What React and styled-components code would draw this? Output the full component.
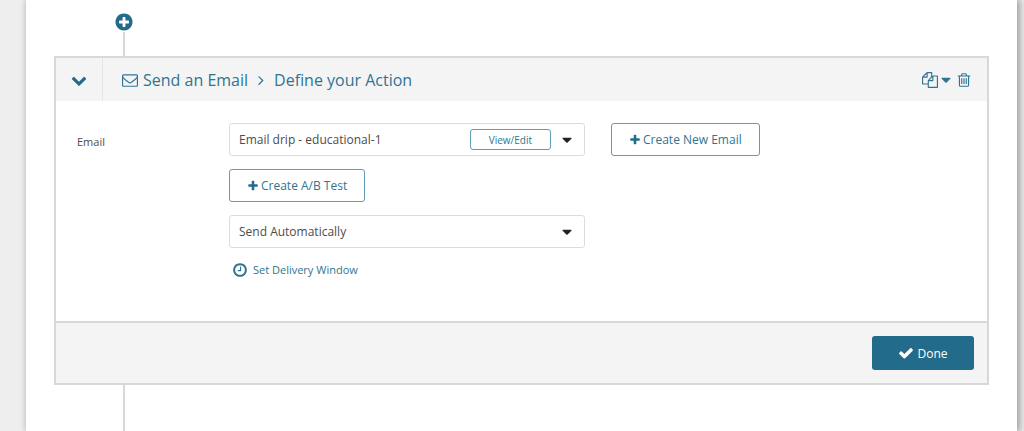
import React from 'react';
import styled, { createGlobalStyle } from 'styled-components';

const teal = '#236b8a';
const tealText = '#2f7593';
const line = '#d8d8d8';

const GlobalStyle = createGlobalStyle`
    * {
        box-sizing: border-box;
    }
    body {
        margin: 0;
        background: #eee;
        color: #4c4c4c;
        font-family: "Open Sans", "Noto Sans", sans-serif;
        font-size: 12px;
    }
    button, select {
        font-family: inherit;
        font-size: inherit;
        color: inherit;
        cursor: pointer;
    }
`;

const Page = styled.main`
    display: flex;
    flex-direction: column;
    min-height: 100vh;
    margin: 0 7px 0 26px;
    padding: 0 28px;
    background: #fff;
    box-shadow: 2px 0 7px 1px rgba(0, 0, 0, .34);
`;

const AddStep = styled.button`
    display: flex;
    width: 20px;
    margin: 12px 0 0 60px;
    padding: 0;
    border: 0;
    background: none;
    color: ${teal};
`;

const Connector = styled.div`
    width: 2px;
    min-height: 24px;
    margin-left: 69px;
    flex: ${props => (props.$grow ? 1 : 'none')};
    background: ${line};
`;

const Card = styled.section`
    border: 2px solid ${line};
    background: #fff;
`;

const CardHeader = styled.header`
    display: flex;
    align-items: center;
    height: 43px;
    padding-right: 15px;
    background: #f4f4f4;
    color: ${tealText};
`;

const Toggle = styled.button`
    display: flex;
    align-items: center;
    justify-content: center;
    width: 47px;
    height: 100%;
    padding: 0;
    border: 0;
    border-right: 1px solid #e4e4e4;
    background: none;
    && {
        color: ${teal};
    }
`;

const Title = styled.h1`
    display: flex;
    align-items: center;
    flex: 1;
    margin: 0 0 0 19px;
    font-size: 16px;
    font-weight: 400;
    line-height: 22px;
`;

const TitleText = styled.span`
    display: flex;
    margin-left: 5px;
`;

const Actions = styled.div`
    display: flex;
    align-items: center;
    gap: 2px;
`;

const IconButton = styled.button`
    display: flex;
    align-items: center;
    padding: 0;
    border: 0;
    background: none;
`;

const CardBody = styled.div`
    display: grid;
    grid-template-columns: 152px 1fr;
    padding: 22px 22px 42px 21px;
`;

const Label = styled.label`
    line-height: 18px;
    padding-top: 10px;
    font-size: 11px;
`;

const Fields = styled.div`
    display: flex;
    flex-direction: column;
    align-items: flex-start;
    gap: 13px;
`;

const FieldRow = styled.div`
    display: flex;
    gap: 26px;
`;

const SelectBox = styled.div`
    position: relative;
    width: 356px;
`;

const Select = styled.select`
    appearance: none;
    display: block;
    width: 100%;
    height: 33px;
    padding: 0 40px 0 9px;
    border: 1px solid #dcdcdc;
    border-radius: 3px;
    background: #fff;
`;

const SelectCaret = styled.span`
    position: absolute;
    top: 0;
    right: 10px;
    display: flex;
    align-items: center;
    height: 100%;
    color: #222;
    pointer-events: none;
`;

const OutlineButton = styled.button`
    display: flex;
    align-items: center;
    justify-content: center;
    gap: 2px;
    height: 33px;
    padding: 0 17px;
    border: 1px solid #5f9cb5;
    border-radius: 3px;
    background: #fff;
    && {
        color: ${tealText};
    }
    svg {
        color: ${teal};
    }
`;

const ViewEdit = styled(OutlineButton)`
    position: absolute;
    top: 6px;
    right: 34px;
    height: 21px;
    padding: 0 18px;
    font-size: 10px;
`;

const DeliveryLink = styled.a`
    display: flex;
    align-items: center;
    gap: 5px;
    padding-left: 3px;
    color: ${tealText};
    font-size: 11px;
    line-height: 18px;
    text-decoration: none;
`;

const CardFooter = styled.footer`
    display: flex;
    justify-content: flex-end;
    padding: 13px;
    border-top: 2px solid ${line};
    background: #f4f4f4;
`;

const DoneButton = styled.button`
    display: flex;
    align-items: center;
    justify-content: center;
    gap: 3px;
    width: 102px;
    height: 34px;
    border: 0;
    border-radius: 3px;
    background: ${teal};
    && {
        color: #fff;
    }
`;

const disc = 'q0 209-103 385.5t-279.5 279.5-385.5 103-385.5-103-279.5-279.5-103-385.5 103-385.5 279.5-279.5 385.5-103 385.5 103 279.5 279.5 103 385.5z';
const bar = 'v576q0 14-9 23t-23 9h-64q-14 0-23-9t-9-23v-576q0-14 9-23t23-9h64q14 0 23 9t9 23z';

const icons = {
    plusCircle: `M1344 960v-128q0-26-19-45t-45-19h-256v-256q0-26-19-45t-45-19h-128q-26 0-45 19t-19 45v256h-256q-26 0-45 19t-19 45v128q0 26 19 45t45 19h256v256q0 26 19 45t45 19h128q26 0 45-19t19-45v-256h256q26 0 45-19t19-45zm320-64${disc}`,
    plus: 'M1600 736v192q0 40-28 68t-68 28h-416v416q0 40-28 68t-68 28h-192q-40 0-68-28t-28-68v-416h-416q-40 0-68-28t-28-68v-192q0-40 28-68t68-28h416v-416q0-40 28-68t68-28h192q40 0 68 28t28 68v416h416q40 0 68 28t28 68z',
    check: 'M1671 566q0 40-28 68l-724 724-136 136q-28 28-68 28t-68-28l-136-136-362-362q-28-28-28-68t28-68l136-136q28-28 68-28t68 28l294 295 656-657q28-28 68-28t68 28l136 136q28 28 28 68z',
    chevronDown: 'M1683 808l-742 741q-19 19-45 19t-45-19l-742-741q-19-19-19-45.5t19-45.5l166-165q19-19 45-19t45 19l531 531 531-531q19-19 45-19t45 19l166 165q19 19 19 45.5t-19 45.5z',
    angleRight: 'M1171 960q0 13-10 23l-466 466q-10 10-23 10t-23-10l-50-50q-10-10-10-23t10-23l393-393-393-393q-10-10-10-23t10-23l50-50q10-10 23-10t23 10l466 466q10 10 10 23z',
    caret: 'M1408 704q0 26-19 45l-448 448q-19 19-45 19t-45-19l-448-448q-19-19-19-45t19-45 45-19h896q26 0 45 19t19 45z',
    clock: `M1024 544v448q0 14-9 23t-23 9h-320q-14 0-23-9t-9-23v-64q0-14 9-23t23-9h224v-352q0-14 9-23t23-9h64q14 0 23 9t9 23zm416 352q0-148-73-273t-198-198-273-73-273 73-198 198-73 273 73 273 198 198 273 73 273-73 198-198 73-273zm224 0${disc}`,
    trash: `M704 736${bar}M960 736${bar}M1216 736${bar}m128 724v-948h-896v948q0 22 7 40.5t14.5 27 10.5 8.5h832q3 0 10.5-8.5t14.5-27 7-40.5zm-672-1076h448l-48-117q-7-9-17-11h-317q-10 2-17 11zm928 32v64q0 14-9 23t-23 9h-96v948q0 83-47 143.5t-113 60.5h-832q-66 0-113-58.5t-47-141.5v-952h-96q-14 0-23-9t-9-23v-64q0-14 9-23t23-9h309l70-167q15-37 54-63t79-26h320q40 0 79 26t54 63l70 167h309q14 0 23 9t9 23z`,
    files: 'M1696 384q40 0 68 28t28 68v1216q0 40-28 68t-68 28h-960q-40 0-68-28t-28-68v-288h-544q-40 0-68-28t-28-68v-672q0-40 20-88t48-76l408-408q28-28 76-48t88-20h416q40 0 68 28t28 68v328q68-40 128-40h416zm-544 213l-299 299h299v-299zm-640-384l-299 299h299v-299zm196 647l316-316v-416h-384v416q0 40-28 68t-68 28h-416v640h512v-256q0-40 20-88t48-76zm956 804v-1152h-384v416q0 40-28 68t-68 28h-416v640h896z',
    envelope: 'M1664 1504v-768q-32 36-69 66-268 206-426 338-51 43-83 67t-86.5 48.5-102.5 24.5h-2q-48 0-102.5-24.5t-86.5-48.5-83-67q-158-132-426-338-37-30-69-66v768q0 13 9.5 22.5t22.5 9.5h1472q13 0 22.5-9.5t9.5-22.5zm0-1051v-24.5l-.5-13-3-12.5-5.5-9-9-7.5-14-2.5h-1472q-13 0-22.5 9.5t-9.5 22.5q0 168 147 284 193 152 401 317 6 5 35 29.5t46 37.5 44.5 31.5 50.5 27.5 43 9h2q20 0 43-9t50.5-27.5 44.5-31.5 46-37.5 35-29.5q208-165 401-317 54-43 100.5-115.5t46.5-131.5zm128-37v1088q0 66-47 113t-113 47h-1472q-66 0-113-47t-47-113v-1088q0-66 47-113t113-47h1472q66 0 113 47t47 113z',
};

const Icon = ({ name, size }) => (
    <svg width={size} height={size} viewBox="0 0 1792 1792" fill="currentColor" aria-hidden="true">
        <path d={icons[name]} />
    </svg>
);

const App = () => (
    <>
        <GlobalStyle />
        <Page>
            <AddStep aria-label="Add step"><Icon name="plusCircle" size={20} /></AddStep>
            <Connector />
            <Card>
                <CardHeader>
                    <Toggle aria-label="Collapse"><Icon name="chevronDown" size={16} /></Toggle>
                    <Title>
                        <Icon name="envelope" size={16} />
                        <TitleText>Send an Email</TitleText>
                        <TitleText><Icon name="angleRight" size={16} /></TitleText>
                        <TitleText>Define your Action</TitleText>
                    </Title>
                    <Actions>
                        <IconButton aria-label="Copy">
                            <Icon name="files" size={16} />
                            <Icon name="caret" size={16} />
                        </IconButton>
                        <IconButton aria-label="Delete"><Icon name="trash" size={16} /></IconButton>
                    </Actions>
                </CardHeader>
                <CardBody>
                    <Label htmlFor="email">Email</Label>
                    <Fields>
                        <FieldRow>
                            <SelectBox>
                                <Select id="email">
                                    <option>Email drip - educational-1</option>
                                </Select>
                                <ViewEdit>View/Edit</ViewEdit>
                                <SelectCaret><Icon name="caret" size={16} /></SelectCaret>
                            </SelectBox>
                            <OutlineButton><Icon name="plus" size={12} />Create New Email</OutlineButton>
                        </FieldRow>
                        <OutlineButton><Icon name="plus" size={12} />Create A/B Test</OutlineButton>
                        <SelectBox>
                            <Select aria-label="Send mode">
                                <option>Send Automatically</option>
                            </Select>
                            <SelectCaret><Icon name="caret" size={16} /></SelectCaret>
                        </SelectBox>
                        <DeliveryLink href="#delivery"><Icon name="clock" size={16} />Set Delivery Window</DeliveryLink>
                    </Fields>
                </CardBody>
                <CardFooter>
                    <DoneButton><Icon name="check" size={16} />Done</DoneButton>
                </CardFooter>
            </Card>
            <Connector $grow />
        </Page>
    </>
);

export default App;
